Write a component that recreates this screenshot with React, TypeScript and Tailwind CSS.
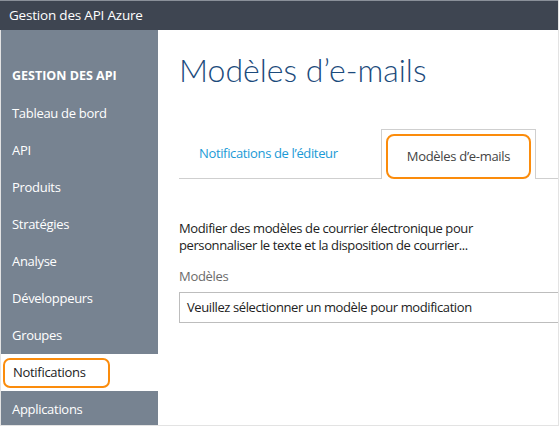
import React from "react";

const items = [
  "Tableau de bord",
  "API",
  "Produits",
  "Stratégies",
  "Analyse",
  "Développeurs",
  "Groupes",
  "Notifications",
  "Applications",
];

export default function App() {
  return (
    <div
      className="w-[559px] h-[426px] overflow-hidden bg-white border-r border-b border-[#e3e3e3] flex flex-col"
      style={{ fontFamily: '"Open Sans", "Noto Sans", sans-serif' }}
    >
      <div className="h-[30px] shrink-0 bg-[#3e4551] flex items-center pl-[9px] text-white text-[13.5px] tracking-[-0.2px] border-t border-[#8a9099]">
        Gestion des API Azure
      </div>
      <div className="flex flex-1 min-h-0">
        <div className="w-[158px] shrink-0 bg-[#778391] pt-[28px] border-l border-[#e3e3e3]">
          <div className="h-[37px] flex items-center pl-[11px] text-white font-bold text-[12.5px]">
            GESTION DES API
          </div>
          {items.map((it) =>
            it === "Notifications" ? (
              <div key={it} className="h-[37px] bg-white flex items-center pl-[2px]">
                <div className="w-[107px] h-[30px] border-2 border-[#fb8c0c] rounded-[7px] flex items-center pl-[8px] text-[#222] text-[13px] tracking-[-0.3px]">
                  {it}
                </div>
              </div>
            ) : (
              <div key={it} className="h-[37px] flex items-center pl-[11px] text-white text-[13px] tracking-[-0.3px]">
                {it}
              </div>
            )
          )}
        </div>
        <div className="flex-1 pl-[21px] flex flex-col">
          <h1
            className="mt-[18px] text-[#1c4b7c] text-[32px] font-light leading-[44px]"
            style={{ fontFamily: 'Lato, "Open Sans", sans-serif' }}
          >
            Modèles d’e-mails
          </h1>
          <div className="mt-[37px] flex items-end border-b border-[#cfcfcf] h-[50px]">
            <div className="w-[202px] h-full flex items-center pl-[20px] text-[#1a9ad6] text-[13px] tracking-[-0.35px]">
              Notifications de l’éditeur
            </div>
            <div className="w-[155px] h-[50px] -mb-px bg-white border border-b-0 border-[#cfcfcf] pt-[4px] px-[4px]">
              <div className="h-full border-2 border-[#fb8c0c] rounded-[8px] flex items-center justify-center text-[#444] text-[13px] tracking-[-0.3px]">
                Modèles d’e-mails
              </div>
            </div>
          </div>
          <p className="mt-[41px] text-[#222] text-[13px] leading-[17px] w-[330px] tracking-[-0.4px]">
            Modifier des modèles de courrier électronique pour personnaliser le texte et la disposition de courrier...
          </p>
          <div className="mt-[14px] text-[#6b6b6b] text-[13px] leading-[17px] tracking-[-0.3px]">Modèles</div>
          <div className="mt-[7px] h-[31px] -mr-[10px] border border-[#bdbdbd] flex items-center pl-[7px] text-[#222] text-[13px] tracking-[-0.4px]">
            Veuillez sélectionner un modèle pour modification
          </div>
        </div>
      </div>
    </div>
  );
}
